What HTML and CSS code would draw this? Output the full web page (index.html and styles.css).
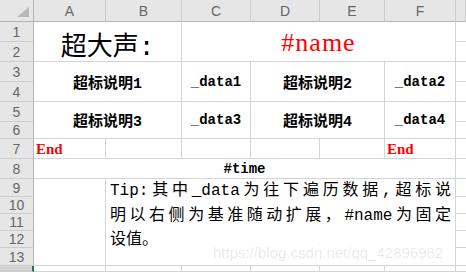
FILE: index.html
```html
<!DOCTYPE html>
<html lang="zh-CN">
<head>
<meta charset="utf-8">
<title>Sheet</title>
<link rel="stylesheet" href="styles.css">
</head>
<body>
<div class="sheet">
  <div class="cell hdr corner y0 xh"><svg class="tri" width="12" height="10" viewBox="0 0 12 10"><polygon points="12,0 12,10 0,10" fill="#b8b8b8"/></svg></div>
  <div class="cell hdr colh y0 xa">A</div>
  <div class="cell hdr colh y0 xb">B</div>
  <div class="cell hdr colh y0 xc">C</div>
  <div class="cell hdr colh y0 xd">D</div>
  <div class="cell hdr colh y0 xe">E</div>
  <div class="cell hdr colh y0 xf">F</div>
  <div class="cell hdr colh y0 xg"></div>

  <div class="cell hdr rowh y1 xh">1</div>
  <div class="cell hdr rowh y2 xh">2</div>
  <div class="cell hdr rowh y3 xh">3</div>
  <div class="cell hdr rowh y4 xh">4</div>
  <div class="cell hdr rowh y5 xh">5</div>
  <div class="cell hdr rowh y6 xh">6</div>
  <div class="cell hdr rowh y7 xh">7</div>
  <div class="cell hdr rowh y8 xh">8</div>
  <div class="cell hdr rowh y9 xh">9</div>
  <div class="cell hdr rowh y10 xh">10</div>
  <div class="cell hdr rowh y11 xh">11</div>
  <div class="cell hdr rowh y12 xh">12</div>
  <div class="cell hdr rowh y13 xh">13</div>
  <div class="cell hdr rowh active y14 xh">14</div>

  <div class="cell title y1 h2 xa w2">超大声:</div>
  <div class="cell name y1 h2 xc w4">#name</div>

  <div class="cell lab y3 h2 xa w2">超标说明1</div>
  <div class="cell dat y3 h2 xc">_data1</div>
  <div class="cell lab y3 h2 xd w2">超标说明2</div>
  <div class="cell dat y3 h2 xf">_data2</div>

  <div class="cell lab y5 h2 xa w2">超标说明3</div>
  <div class="cell dat y5 h2 xc">_data3</div>
  <div class="cell lab y5 h2 xd w2">超标说明4</div>
  <div class="cell dat y5 h2 xf">_data4</div>

  <div class="cell end y7 xa">End</div>
  <div class="cell y7 xb"></div>
  <div class="cell y7 xc"></div>
  <div class="cell y7 xd"></div>
  <div class="cell y7 xe"></div>
  <div class="cell end y7 xf">End</div>

  <div class="cell time y8 xa w6">#time</div>

  <div class="cell y9 h5 xa"></div>
  <div class="cell tip y9 h5 xb w5">
    <div class="ln">Tip:其中_data为往下遍历数据,超标说</div>
    <div class="ln">明以右侧为基准随动扩展，#name为固定</div>
    <div class="last">设值。</div>
  </div>

  <div class="cell y14 xa"></div>
  <div class="cell y14 xb"></div>
  <div class="cell y14 xc"></div>
  <div class="cell y14 xd"></div>
  <div class="cell y14 xe"></div>
  <div class="cell y14 xf"></div>

  <div class="cell gcol y1 xg"></div>
  <div class="cell gcol y2 xg"></div>
  <div class="cell gcol y3 xg"></div>
  <div class="cell gcol y4 xg"></div>
  <div class="cell gcol y5 xg"></div>
  <div class="cell gcol y6 xg"></div>
  <div class="cell gcol y7 xg"></div>
  <div class="cell gcol y8 xg"></div>
  <div class="cell gcol y9 xg"></div>
  <div class="cell gcol y10 xg"></div>
  <div class="cell gcol y11 xg"></div>
  <div class="cell gcol y12 xg"></div>
  <div class="cell gcol y13 xg"></div>
  <div class="cell gcol y14 xg"></div>

  <div class="wm">https://blog.csdn.net/qq_42896982</div>
</div>
</body>
</html>
```
FILE: styles.css
```css
html, body {
  margin: 0;
  padding: 0;
}
body {
  width: 466px;
  height: 272px;
  overflow: hidden;
  background: #ffffff;
  color: #000000;
  font-family: "Liberation Mono", "Noto Sans CJK SC", monospace;
}
.sheet {
  position: relative;
  display: grid;
  width: 466px;
  height: 272px;
  grid-template-columns: 34px 72px 76px 69px 69px 65px 71px 1fr;
  grid-template-rows: 22px 20px 20px 20px 20px 20px 17px 20px 20px 18px 17px 17px 17px 18px 1fr;
  overflow: hidden;
}
.cell {
  box-sizing: border-box;
  border-right: 1px solid #d4d4d4;
  border-bottom: 1px solid #d4d4d4;
  display: flex;
  align-items: center;
  justify-content: center;
  overflow: hidden;
  white-space: nowrap;
  min-width: 0;
  min-height: 0;
  background: #ffffff;
}

/* placement */
.y0 { grid-row-start: 1; }
.y1 { grid-row-start: 2; }
.y2 { grid-row-start: 3; }
.y3 { grid-row-start: 4; }
.y4 { grid-row-start: 5; }
.y5 { grid-row-start: 6; }
.y6 { grid-row-start: 7; }
.y7 { grid-row-start: 8; }
.y8 { grid-row-start: 9; }
.y9 { grid-row-start: 10; }
.y10 { grid-row-start: 11; }
.y11 { grid-row-start: 12; }
.y12 { grid-row-start: 13; }
.y13 { grid-row-start: 14; }
.y14 { grid-row-start: 15; }
.h2 { grid-row-end: span 2; }
.h5 { grid-row-end: span 5; }
.xh { grid-column-start: 1; }
.xa { grid-column-start: 2; }
.xb { grid-column-start: 3; }
.xc { grid-column-start: 4; }
.xd { grid-column-start: 5; }
.xe { grid-column-start: 6; }
.xf { grid-column-start: 7; }
.xg { grid-column-start: 8; }
.w2 { grid-column-end: span 2; }
.w4 { grid-column-end: span 4; }
.w5 { grid-column-end: span 5; }
.w6 { grid-column-end: span 6; }

/* headers */
.hdr {
  background: #e6e6e6;
  color: #666666;
  font-family: "Liberation Sans", Arial, sans-serif;
  font-size: 14px;
}
.colh {
  border-right-color: #cdcdcd;
  border-bottom-color: #b4b4b4;
}
.rowh {
  border-right-color: #b4b4b4;
  border-bottom-color: #cdcdcd;
}
.corner {
  border-right-color: #b4b4b4;
  border-bottom-color: #b4b4b4;
  justify-content: flex-end;
  align-items: flex-end;
  padding: 0 4px 4px 0;
}
.tri {
  display: block;
}
.active {
  background: #d2d2d2;
  color: #217346;
  border-right: 2px solid #217346;
  align-items: flex-start;
  padding-top: 3px;
}
.gcol {
  border-right: none;
}

/* content */
.title {
  font-size: 26px;
  padding-top: 4px;
}
.name {
  color: #ff0000;
  font-family: "Liberation Serif", "Noto Sans CJK SC", serif;
  font-size: 26px;
  letter-spacing: 1px;
  padding-top: 2px;
}
.lab {
  font-size: 15px;
  font-weight: 700;
}
.dat {
  font-size: 14px;
  font-weight: 700;
}
.end {
  color: #ff0000;
  font-family: "Liberation Serif", serif;
  font-size: 15px;
  font-weight: 700;
  line-height: 17px;
  justify-content: flex-start;
  align-items: flex-end;
  padding-left: 2px;
}
.time {
  font-size: 14px;
  font-weight: 700;
  line-height: 17px;
  align-items: flex-end;
}
.tip {
  display: block;
  white-space: nowrap;
  font-size: 16px;
  line-height: 24.5px;
  padding: 0 4px;
}
.tip .ln {
  text-align: justify;
  text-align-last: justify;
}
.tip .last {
  text-align: left;
}
.wm {
  position: absolute;
  left: 213px;
  top: 244px;
  font-family: "Liberation Sans", Arial, sans-serif;
  font-size: 15px;
  color: rgba(0, 0, 0, 0.1);
  white-space: nowrap;
  pointer-events: none;
}
```
